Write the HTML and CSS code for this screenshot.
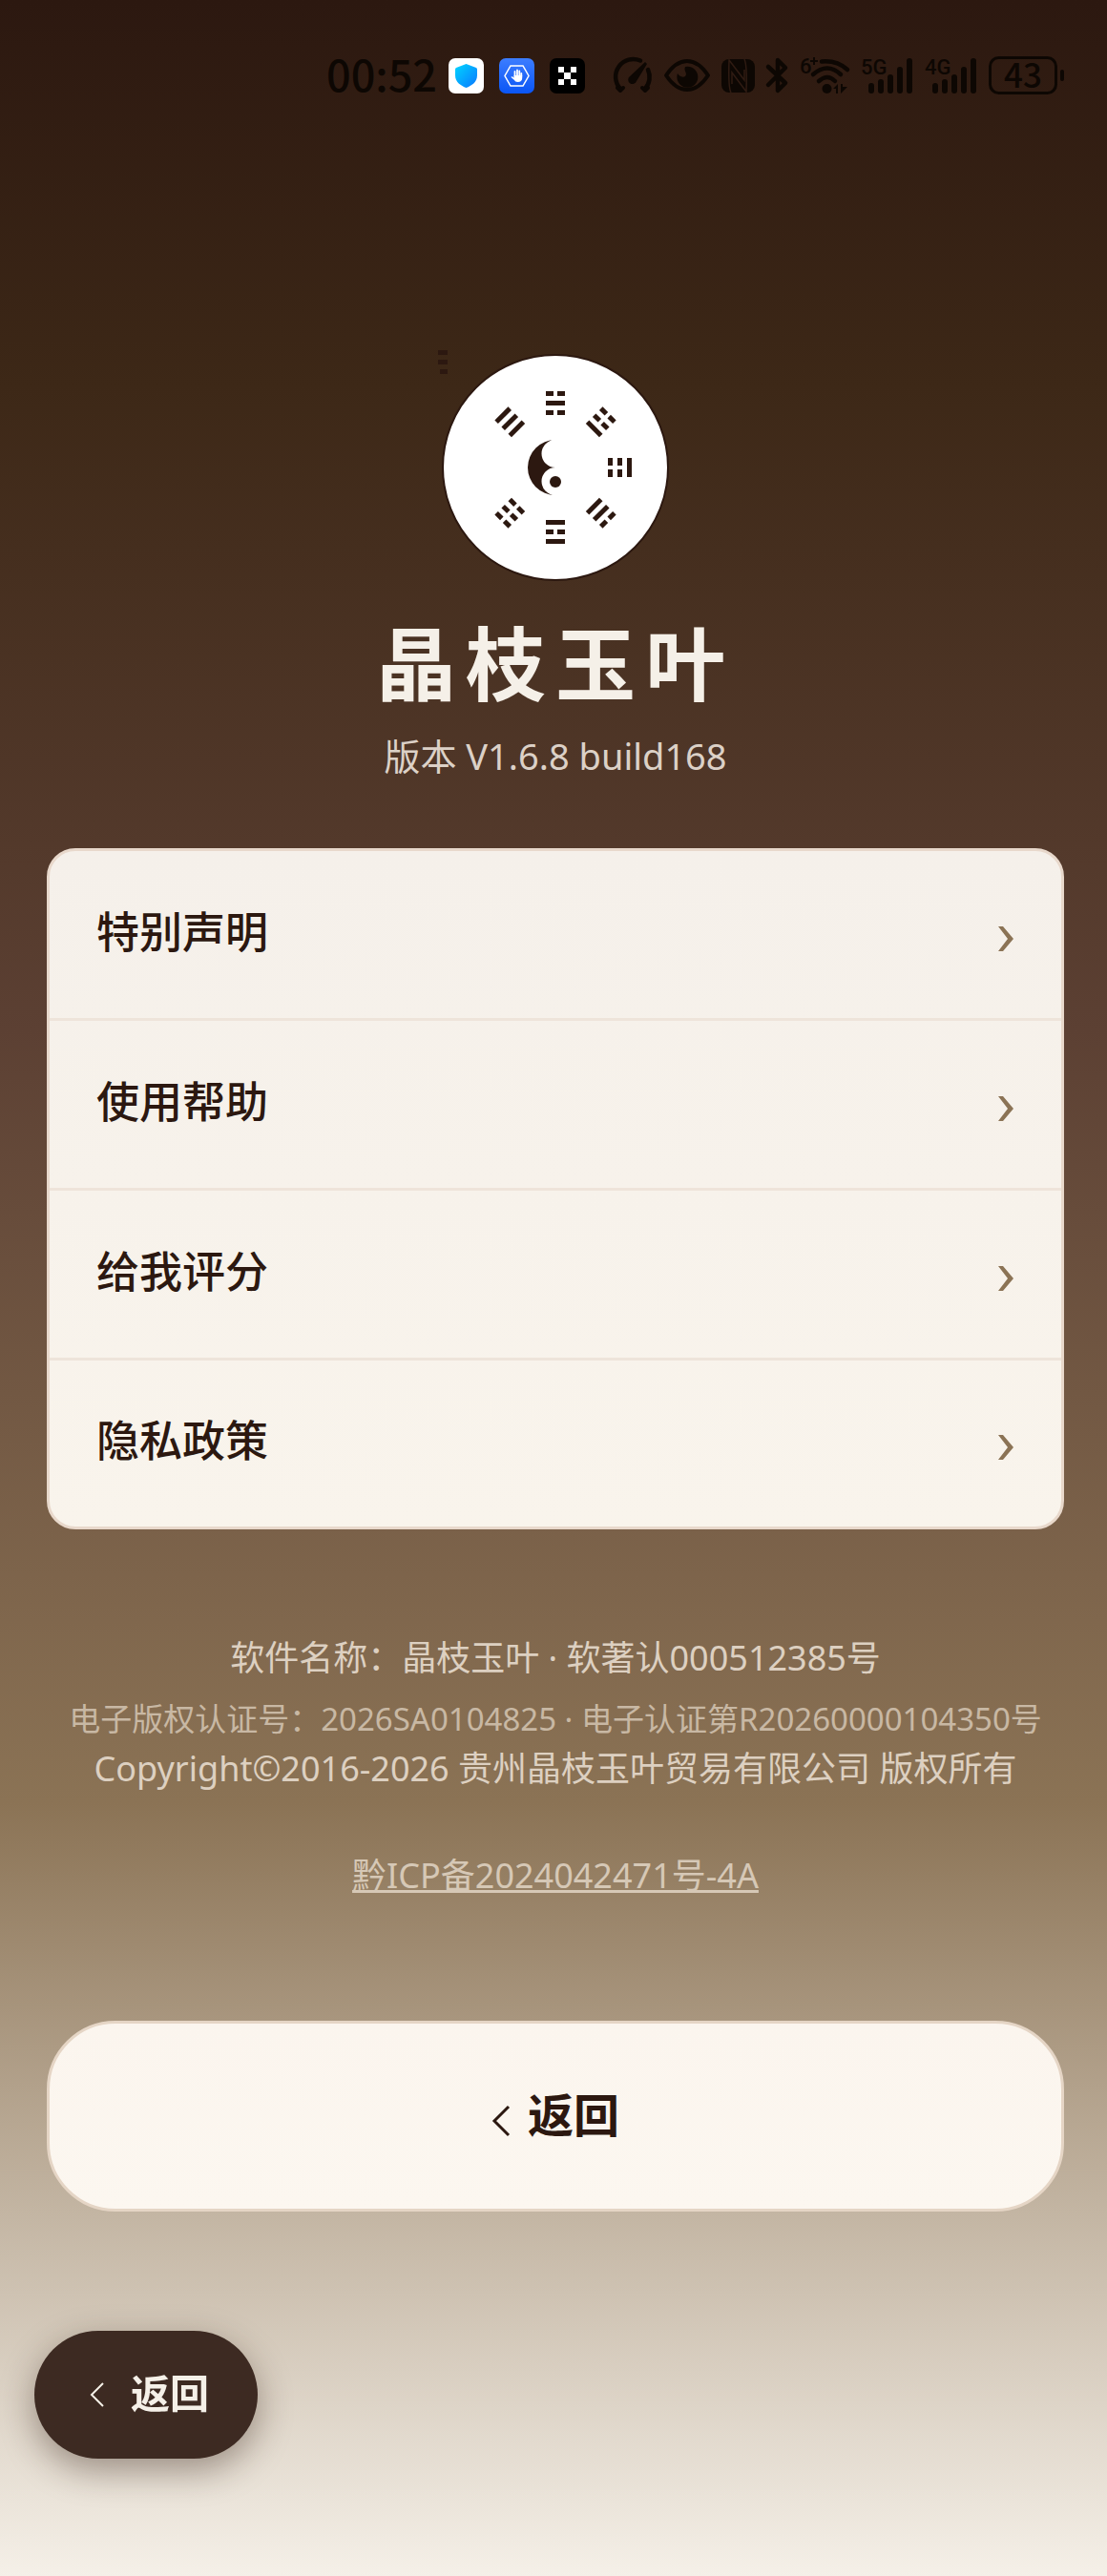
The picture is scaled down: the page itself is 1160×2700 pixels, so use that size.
FILE: index.html
```html
<!DOCTYPE html>
<html lang="zh-CN">
<head>
    <meta charset="UTF-8">
    <meta name="viewport" content="width=device-width, initial-scale=1.0">
    <title>晶枝玉叶</title>
    <link rel="stylesheet" href="styles.css">
</head>
<body>
    <div class="status-bar">
        <span class="time">00:52</span>
        <div class="apps">
            <svg width="37" height="37" viewBox="0 0 37 37">
                <defs>
                    <linearGradient id="shield" x1="0" y1="0" x2="1" y2="1">
                        <stop offset="0" stop-color="#00d5ff"/>
                        <stop offset="1" stop-color="#0a78ff"/>
                    </linearGradient>
                </defs>
                <rect width="37" height="37" rx="7" fill="#fff"/>
                <path d="M18.5 6L29 10Q30 10.5 30 12V18C30 25 24 29 18.5 31C13 29 7 25 7 18V12Q7 10.5 8 10Z" fill="url(#shield)"/>
            </svg>
            <svg width="37" height="37" viewBox="0 0 37 37">
                <defs>
                    <linearGradient id="blue" x1="0" y1="0" x2="0" y2="1">
                        <stop offset="0" stop-color="#3c7dff"/>
                        <stop offset="1" stop-color="#0a55f5"/>
                    </linearGradient>
                </defs>
                <rect width="37" height="37" rx="7" fill="url(#blue)"/>
                <path d="M12 8H25L31 18.5L25 29H12L6 18.5Z" fill="none" stroke="#fff" stroke-width="1.5"/>
                <path d="M16.5 19V14M19 18V12.5M21.3 18V13.5M23.3 19V16" stroke="#fff" stroke-width="1.8" stroke-linecap="round"/>
                <path d="M15.6 18H24.2V21Q24 25 19.5 25Q17 25 15.5 22.5L12.5 20Q13 18.5 15.6 20.5Z" fill="#fff"/>
            </svg>
            <svg width="37" height="37" viewBox="0 0 37 37">
                <rect width="37" height="37" rx="7" fill="#000"/>
                <path d="M9 9h6v6h-6zM22 9h6v6h-6zM15 15h7v7h-7zM9 22h6v6h-6zM22 22h6v6h-6z" fill="#fff"/>
            </svg>
        </div>
        <div class="system">
            <!-- gauge -->
            <svg width="42" height="38" viewBox="0 0 42 38">
                <path d="M8 33A18.5 18.5 0 0 1 29 3.5M37 13A18.5 18.5 0 0 1 34 33" fill="none" stroke="#0d0703" stroke-width="4.5" stroke-linecap="round"/>
                <path d="M5 32L8 35L11 32M31 32L34 35L37 32" fill="none" stroke="#0d0703" stroke-width="4" stroke-linecap="round" stroke-linejoin="round"/>
                <path d="M34 5L36 7L25 25A4.5 4.5 0 1 1 18 20Z" fill="#0d0703"/>
            </svg>
            <!-- eye -->
            <svg width="48" height="38" viewBox="0 0 48 38">
                <path d="M2 19Q12 4 24 4T46 19Q36 34 24 34T2 19Z" fill="none" stroke="#0d0703" stroke-width="4" stroke-linejoin="round"/>
                <path d="M22 10C20 14 25 17 22 20C19 22 15 19 14 17A11 11 0 1 0 22 10Z" fill="#0d0703"/>
            </svg>
            <!-- nfc -->
            <svg width="35" height="38" viewBox="0 0 35 38">
                <rect y="2" width="35" height="35" rx="8" fill="#0d0703"/>
                <path d="M10 37Q7 32 8 3L24 24V13M24 2Q27 8 26 36L11 16V28" fill="none" stroke="#2f1b12" stroke-width="1.5"/>
            </svg>
            <!-- bluetooth -->
            <svg width="23" height="38" viewBox="0 0 23 38">
                <path d="M2 10L20 27L12 35V3L20 11L2 29" fill="none" stroke="#0d0703" stroke-width="4.5" stroke-linecap="round" stroke-linejoin="round"/>
            </svg>
            <!-- wifi -->
            <svg width="52" height="38" viewBox="0 0 52 38">
                <text class="tiny" x="0" y="17">6</text>
                <path d="M11 4H19M15 0V8" stroke="#0d0703" stroke-width="2"/>
                <path d="M23 4.5Q39 3 50 13M14 18Q29 5 43 18M20 25Q29 17 37 25" fill="none" stroke="#0d0703" stroke-width="4.5" stroke-linecap="round"/>
                <circle cx="28.5" cy="33" r="5" fill="#0d0703"/>
                <path d="M35 33L40 28V38H38V33ZM43 28V38L50 31H45V28Z" fill="#0d0703"/>
            </svg>
            <svg width="55" height="38" viewBox="0 0 55 38">
                <text class="tiny" x="0" y="18">5G</text>
                <path d="M11 30V35M21 26V35M31 21V35M41 13V35M51 4V35" stroke="#0d0703" stroke-width="6" stroke-linecap="round"/>
            </svg>
            <svg width="55" height="38" viewBox="0 0 55 38">
                <text class="tiny" x="0" y="18">4G</text>
                <path d="M11 30V35M21 26V35M31 21V35M41 13V35M51 4V35" stroke="#0d0703" stroke-width="6" stroke-linecap="round"/>
            </svg>
            <!-- battery -->
            <svg width="80" height="40" viewBox="0 0 80 40">
                <rect x="1.5" y="1.5" width="69" height="37" rx="9" fill="none" stroke="#0d0703" stroke-width="3"/>
                <rect x="75" y="14" width="4" height="12" rx="2" fill="#0d0703"/>
                <text class="level" x="36" y="33" text-anchor="middle">43</text>
            </svg>
        </div>
    </div>

    <main class="container">
        <svg class="logo" width="240" height="240" viewBox="-120 -120 240 240" fill="#2c1810">
            <defs>
                <path id="solid" d="M-10-3h20v5h-20z"/>
                <path id="broken" d="M-10-3h8v5h-8zM2-3h8v5h-8z"/>
            </defs>
            <circle r="118" fill="#fff" stroke="#2c1810" stroke-width="2"/>
            <path d="M0-29A29 29 0 0 0 0 29A14.5 14.5 0 0 1 0 0A14.5 14.5 0 0 1 0-29Z"/>
            <circle cy="15" r="6"/>
            <!-- trigrams, clockwise from the top -->
            <g transform="translate(0 -67)">
                <use href="#broken" y="-10"/><use href="#solid"/><use href="#broken" y="10"/>
            </g>
            <g transform="rotate(45) translate(0 -67)">
                <use href="#broken" y="-10"/><use href="#broken"/><use href="#solid" y="10"/>
            </g>
            <g transform="rotate(90) translate(0 -67)">
                <use href="#solid" y="-10"/><use href="#broken"/><use href="#broken" y="10"/>
            </g>
            <g transform="rotate(135) translate(0 -67)">
                <use href="#broken" y="-10"/><use href="#solid"/><use href="#solid" y="10"/>
            </g>
            <g transform="rotate(180) translate(0 -67)">
                <use href="#solid" y="-10"/><use href="#broken"/><use href="#solid" y="10"/>
            </g>
            <g transform="rotate(225) translate(0 -67)">
                <use href="#broken" y="-10"/><use href="#broken"/><use href="#broken" y="10"/>
            </g>
            <g transform="rotate(315) translate(0 -67)">
                <use href="#solid" y="-10"/><use href="#solid"/><use href="#solid" y="10"/>
            </g>
            <path d="M-123-123h10v5h-10zM-123-113h10v5h-10zM-121-103h8v5h-8z"/>
        </svg>
        <h1>晶枝玉叶</h1>
        <p class="version">版本 V1.6.8 build168</p>

        <nav class="menu">
            <a href="#statement">特别声明
                <svg class="arrow" width="16" height="26" viewBox="0 0 16 26"><path d="M0 0H5L16 13L5 26H0L10 13Z"/></svg>
            </a>
            <a href="#help">使用帮助
                <svg class="arrow" width="16" height="26" viewBox="0 0 16 26"><path d="M0 0H5L16 13L5 26H0L10 13Z"/></svg>
            </a>
            <a href="#rate">给我评分
                <svg class="arrow" width="16" height="26" viewBox="0 0 16 26"><path d="M0 0H5L16 13L5 26H0L10 13Z"/></svg>
            </a>
            <a href="#privacy">隐私政策
                <svg class="arrow" width="16" height="26" viewBox="0 0 16 26"><path d="M0 0H5L16 13L5 26H0L10 13Z"/></svg>
            </a>
        </nav>

        <footer class="footer">
            <p>软件名称：晶枝玉叶 · 软著认000512385号</p>
            <p class="cert">电子版权认证号：2026SA0104825 · 电子认证第R20260000104350号</p>
            <p>Copyright©2016-2026 贵州晶枝玉叶贸易有限公司 版权所有</p>
            <a class="icp" href="#icp">黔ICP备2024042471号-4A</a>
        </footer>

        <button type="button" class="back-btn">
            <svg width="20" height="32" viewBox="0 0 20 32"><path d="M18 1L3 16L18 31" stroke-width="3"/></svg>
            返回
        </button>
    </main>

    <button type="button" class="float-btn">
        <svg width="15" height="26" viewBox="0 0 15 26"><path d="M14 1L2 13L14 25" stroke-width="2"/></svg>
        返回
    </button>
</body>
</html>
```
FILE: styles.css
```css
* {
    box-sizing: border-box;
}

body {
    font-family: "Noto Sans", "Noto Sans CJK SC", sans-serif;
    background: linear-gradient(180deg, #2c1810 0%, #3d2817 15%, #5c4033 40%, #8b7355 70%, #f5f0e8 100%);
    margin: 0;
    min-height: 100vh;
    color: #f5f0e8;
}

p, h1 {
    margin: 0;
}

svg {
    display: block;
    flex: none;
    overflow: visible;
}

/* Status bar */
.status-bar {
    display: flex;
    justify-content: flex-end;
    align-items: center;
    height: 158px;
    padding-right: 44px;
    color: #0d0703;
}

.time {
    font-family: "Noto Sans CJK SC", sans-serif;
    font-size: 45px;
    line-height: 48px;
    font-weight: 500;
    margin-right: 12px;
    padding-bottom: 4px;
}

.apps {
    display: flex;
    gap: 16px;
    margin-right: 29px;
}

.system {
    display: flex;
    align-items: center;
    gap: 12px;
}

.tiny {
    font-family: Roboto, sans-serif;
    font-size: 22px;
    font-weight: 500;
    fill: #0d0703;
}

.level {
    font-family: "Noto Sans CJK SC", sans-serif;
    font-size: 35px;
    font-weight: 500;
    fill: #0d0703;
}

/* Content */
.container {
    display: flex;
    flex-direction: column;
    align-items: center;
    padding: 212px 45px 360px 49px;
}

h1 {
    font-size: 84px;
    line-height: 92px;
    font-weight: 700;
    letter-spacing: 10px;
    margin-top: 40px;
}

.version {
    font-size: 38px;
    line-height: 48px;
    margin-top: 26px;
    color: #dcd1c7;
}

.menu {
    align-self: stretch;
    margin-top: 73px;
    border: 3px solid #e8d8cb;
    border-radius: 30px;
    background: linear-gradient(180deg, #f5f0ea, #f9f4ec);
    overflow: hidden;
}

.menu a {
    display: flex;
    justify-content: space-between;
    align-items: center;
    height: 178px;
    padding: 0 50px 6px 49px;
    border-bottom: 3px solid #eee4da;
    color: #2c1810;
    font-size: 45px;
    line-height: 56px;
    font-weight: 500;
    text-decoration: none;
}

.menu a:last-child {
    height: 174px;
    border-bottom: none;
}

.arrow {
    margin-top: 14px;
    fill: #8b7355;
}

.footer {
    margin-top: 109px;
    text-align: center;
    font-size: 36px;
    line-height: 52px;
    color: #ddd0c1;
}

.footer .cert {
    font-size: 33px;
    margin-top: 12px;
    color: #c8b8a4;
}

.icp {
    display: inline-block;
    margin-top: 60px;
    color: #d6c8b6;
    text-decoration-thickness: 3px;
}

.back-btn, .float-btn {
    display: flex;
    justify-content: center;
    align-items: center;
    font-family: inherit;
    font-weight: 700;
    cursor: pointer;
}

.back-btn svg, .float-btn svg {
    fill: none;
    stroke: currentColor;
}

.back-btn {
    align-self: stretch;
    gap: 18px;
    height: 200px;
    margin-top: 126px;
    padding-bottom: 10px;
    border: 3px solid #e5d5c5;
    border-radius: 72px;
    background: linear-gradient(180deg, #fbf5ee, #fcf7f0);
    color: #2c1810;
    font-size: 48px;
}

.back-btn svg {
    margin-top: 18px;
}

.float-btn {
    position: fixed;
    left: 36px;
    bottom: 123px;
    gap: 28px;
    height: 134px;
    padding: 0 51px 8px 58px;
    border: none;
    border-radius: 67px;
    background: #3d2a22;
    box-shadow: 0 12px 36px rgba(44, 24, 16, 0.4);
    color: #f5f0e8;
    font-size: 41px;
}

.float-btn svg {
    margin-top: 8px;
}
```
